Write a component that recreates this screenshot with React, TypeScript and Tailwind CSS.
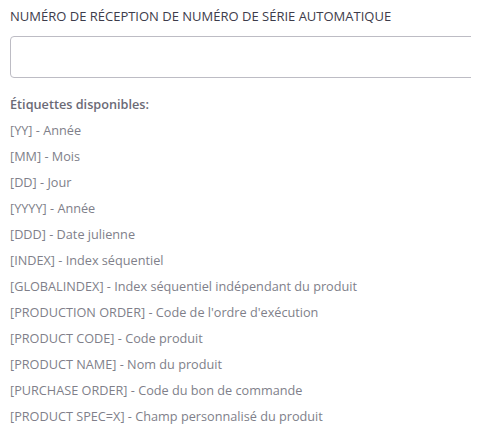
const tags = [
  ["[YY]", "Année"],
  ["[MM]", "Mois"],
  ["[DD]", "Jour"],
  ["[YYYY]", "Année"],
  ["[DDD]", "Date julienne"],
  ["[INDEX]", "Index séquentiel"],
  ["[GLOBALINDEX]", "Index séquentiel indépendant du produit"],
  ["[PRODUCTION ORDER]", "Code de l'ordre d'exécution"],
  ["[PRODUCT CODE]", "Code produit"],
  ["[PRODUCT NAME]", "Nom du produit"],
  ["[PURCHASE ORDER]", "Code du bon de commande"],
  ["[PRODUCT SPEC=X]", "Champ personnalisé du produit"],
];

export default function App() {
  return (
    <div className="w-[501px] h-[438px] bg-white overflow-hidden font-['Open_Sans',sans-serif]">
      <div className="w-[471px] pl-[10px] overflow-hidden">
        {/* champ */}
        <div className="pt-[7px] text-[13px] leading-[18px] text-[#3d3c4b]">
          NUMÉRO DE RÉCEPTION DE NUMÉRO DE SÉRIE AUTOMATIQUE
        </div>
        <input
          type="text"
          className="mt-[11px] block w-[480px] h-[42px] border border-[#bdbcc4] rounded-[4px] outline-none px-3 text-sm"
        />

        {/* étiquettes */}
        <div className="mt-[13px] text-[12.7px] leading-[26px]">
          <div className="font-semibold text-[#6b6a76]">Étiquettes disponibles:</div>
          {tags.map(([tag, label]) => (
            <div key={tag} className="text-[#807f8a]">
              {tag} - {label}
            </div>
          ))}
        </div>
      </div>
    </div>
  );
}
